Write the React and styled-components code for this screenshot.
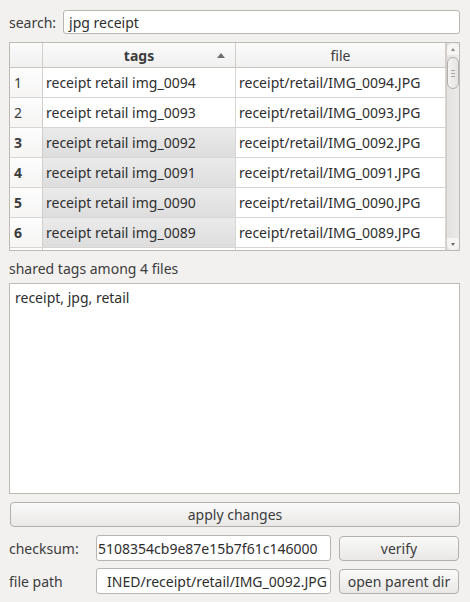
import React from "react";
import styled, { createGlobalStyle } from "styled-components";

const Global = createGlobalStyle`
  html, body { margin: 0; padding: 0; background: #f2f1f0; }
  body { font-family: "Noto Sans", "DejaVu Sans", sans-serif; font-size: 14px; color: #3c3c3c; }
  * { box-sizing: border-box; }
`;

const Window = styled.div`
  width: 470px;
  height: 602px;
  padding: 8px 10px 8px 9px;
  display: flex;
  flex-direction: column;
  background: #f2f1f0;
`;

const Row = styled.div`
  display: flex;
  align-items: center;
  gap: ${(p) => p.gap ?? 7}px;
  margin-top: ${(p) => p.mt || 0}px;
  height: ${(p) => p.h}px;
`;

const Label = styled.span`
  width: ${(p) => (p.w ? `${p.w}px` : "auto")};
  flex: none;
  white-space: nowrap;
  color: #3c3c3c;
`;

const Field = styled.div`
  flex: ${(p) => (p.w ? "none" : "1")};
  width: ${(p) => (p.w ? `${p.w}px` : "auto")};
  height: ${(p) => p.h || 24}px;
  border: 1px solid #b9b5b1;
  border-radius: 3px;
  background: #fff;
  display: flex;
  align-items: center;
  justify-content: ${(p) => (p.end ? "flex-end" : "flex-start")};
  padding: 0 ${(p) => (p.end ? 3 : 5)}px 0 ${(p) => p.pl ?? 5}px;
  overflow: hidden;
  white-space: nowrap;
  color: #2e2e2e;
`;

const Table = styled.div`
  margin-top: 8px;
  height: 211px;
  border: 1px solid #bdb9b5;
  background: #fff;
  display: flex;
  overflow: hidden;
`;

const Grid = styled.div`
  flex: 1;
  display: grid;
  grid-template-columns: 33px 193px 1fr;
  grid-auto-rows: 30px;
  grid-template-rows: 25px;
  align-content: start;
`;

const Head = styled.div`
  background: linear-gradient(#fbfbfb, #f1f0ef);
  border-right: 1px solid #d0cdca;
  border-bottom: 1px solid #c8c5c2;
  display: flex;
  align-items: center;
  justify-content: center;
  font-weight: ${(p) => (p.bold ? 700 : 400)};
  color: #3c3c3c;
  position: relative;
`;

const SortArrow = styled.span`
  position: absolute;
  right: 10px;
  top: 10px;
  width: 0;
  height: 0;
  border-left: 4px solid transparent;
  border-right: 4px solid transparent;
  border-bottom: 5px solid #6e6e6e;
`;

const NumCell = styled.div`
  background: linear-gradient(#fdfdfd, #f6f5f4);
  border-right: 1px solid #d0cdca;
  border-bottom: 1px solid #d8d5d2;
  display: flex;
  align-items: center;
  padding-left: 4px;
  font-weight: ${(p) => (p.sel ? 700 : 400)};
  color: #3c3c3c;
`;

const Cell = styled.div`
  background: ${(p) => (p.sel ? "linear-gradient(#ebebeb, #dddddd)" : "#fff")};
  border-right: 1px solid #d8d5d2;
  border-bottom: 1px solid #d8d5d2;
  display: flex;
  align-items: center;
  padding-left: 3px;
  white-space: nowrap;
  overflow: hidden;
  color: #2e2e2e;
`;

const Scroll = styled.div`
  width: 13px;
  flex: none;
  background: linear-gradient(90deg, #e4e2e0, #eceae8);
  border-left: 1px solid #d0cdca;
  display: flex;
  flex-direction: column;
  align-items: center;
  position: relative;
`;

const Arrow = styled.div`
  height: 12px;
  width: 100%;
  display: flex;
  align-items: center;
  justify-content: center;
  background: #f6f5f4;
  border-radius: ${(p) => (p.up ? "6px 6px 0 0" : "0 0 6px 6px")};
  margin-top: ${(p) => (p.up ? 0 : "auto")};
  &::after {
    content: "";
    border-left: 2.5px solid transparent;
    border-right: 2.5px solid transparent;
    ${(p) => (p.up ? "border-bottom: 3px solid #8a8a8a;" : "border-top: 3px solid #6a6a6a;")}
  }
`;

const Thumb = styled.div`
  width: 12px;
  height: 32px;
  margin-top: 2px;
  border: 1px solid #b2afac;
  border-radius: 6px;
  background: linear-gradient(90deg, #f4f3f2, #e6e4e2);
  display: flex;
  flex-direction: column;
  align-items: center;
  justify-content: center;
  gap: 2px;
  & > i {
    width: 4px;
    height: 1px;
    background: #a9a6a3;
  }
`;

const Caption = styled.div`
  margin-top: 9px;
  height: 17px;
  line-height: 17px;
  color: #3c3c3c;
`;

const Area = styled.div`
  margin-top: 6px;
  height: 212px;
  border: 1px solid #bdb9b5;
  background: #fff;
  padding: 4px 5px;
  color: #2e2e2e;
`;

const Button = styled.div`
  flex: ${(p) => (p.w ? "none" : "1")};
  width: ${(p) => (p.w ? `${p.w}px` : "auto")};
  height: 25px;
  margin-left: ${(p) => p.ml || 0}px;
  border: 1px solid #b3afab;
  border-radius: 4px;
  background: linear-gradient(#fafafa, #e9e8e6);
  display: flex;
  align-items: center;
  justify-content: center;
  color: #3c3c3c;
  white-space: nowrap;
`;

const rows = [
  ["receipt retail img_0094", "receipt/retail/IMG_0094.JPG", false],
  ["receipt retail img_0093", "receipt/retail/IMG_0093.JPG", false],
  ["receipt retail img_0092", "receipt/retail/IMG_0092.JPG", true],
  ["receipt retail img_0091", "receipt/retail/IMG_0091.JPG", true],
  ["receipt retail img_0090", "receipt/retail/IMG_0090.JPG", true],
  ["receipt retail img_0089", "receipt/retail/IMG_0089.JPG", true],
];

export default function App() {
  return (
    <>
      <Global />
      <Window>
        <Row h={24} mt={2}>
          <Label>search:</Label>
          <Field>jpg receipt</Field>
        </Row>
        <Table>
          <Grid>
            <Head />
            <Head bold>
              tags
              <SortArrow />
            </Head>
            <Head>file</Head>
            {rows.map(([t, f, sel], i) => (
              <React.Fragment key={i}>
                <NumCell sel={sel}>{i + 1}</NumCell>
                <Cell sel={sel}>{t}</Cell>
                <Cell>{f}</Cell>
              </React.Fragment>
            ))}
            <NumCell />
            <Cell />
            <Cell />
          </Grid>
          <Scroll>
            <Arrow up />
            <Thumb>
              <i />
              <i />
              <i />
            </Thumb>
            <Arrow />
          </Scroll>
        </Table>
        <Caption>shared tags among 4 files</Caption>
        <Area>receipt, jpg, retail</Area>
        <Row h={25} mt={8}>
          <Button ml={1}>apply changes</Button>
        </Row>
        <Row h={26} mt={8} gap={0}>
          <Label w={87}>checksum:</Label>
          <Field w={235} h={26} pl={1}>5108354cb9e87e15b7f61c146000</Field>
          <Button w={120} ml={8}>verify</Button>
        </Row>
        <Row h={26} mt={7} gap={0}>
          <Label w={87}>file path</Label>
          <Field w={235} h={26} end>
            INED/receipt/retail/IMG_0092.JPG
          </Field>
          <Button w={120} ml={8}>open parent dir</Button>
        </Row>
      </Window>
    </>
  );
}
